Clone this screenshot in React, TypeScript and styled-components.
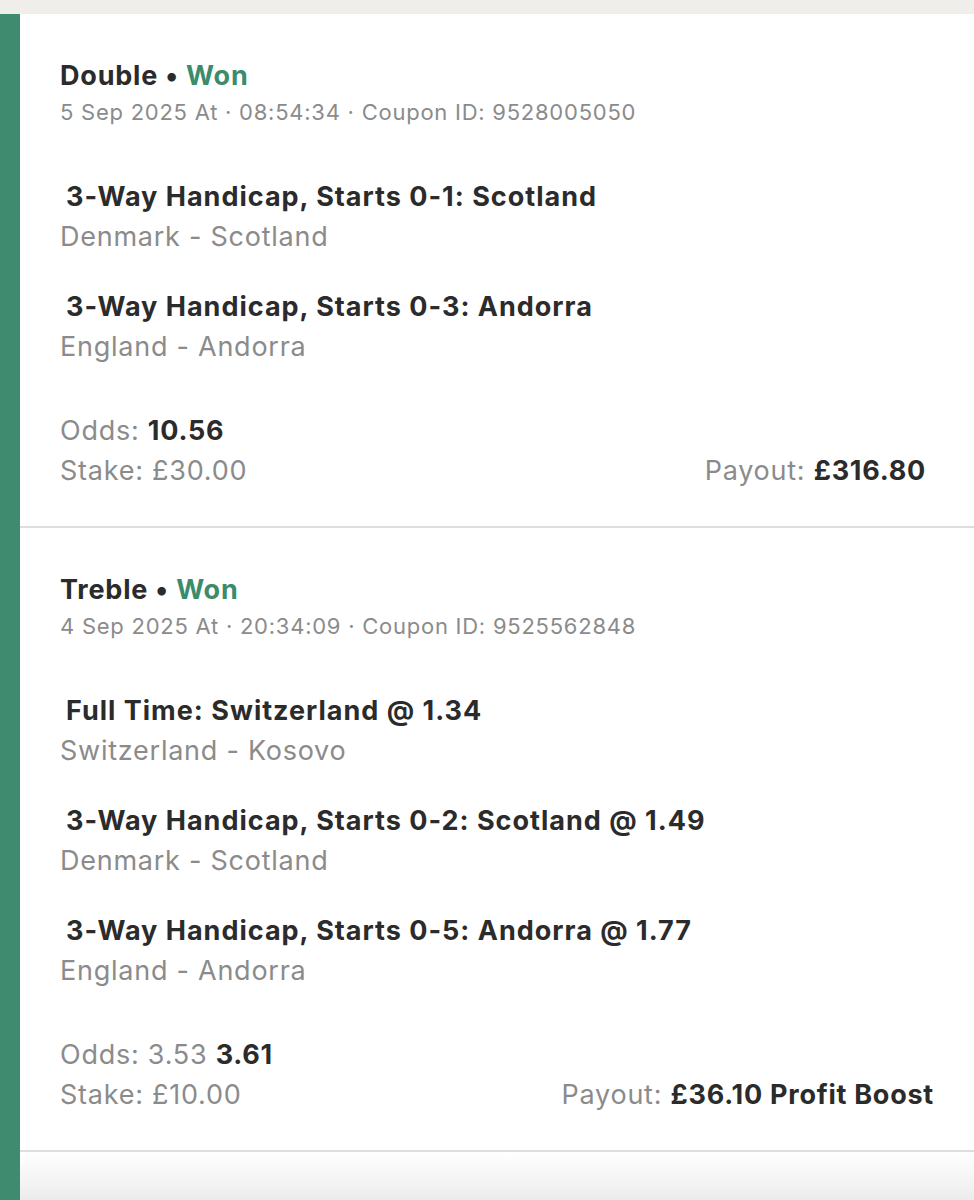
import React from 'react';
import styled, { createGlobalStyle } from 'styled-components';

interface Selection {
  market: string;
  event: string;
}

interface Bet {
  id: string;
  type: string;
  status: string;
  date: string;
  time: string;
  coupon: string;
  selections: Selection[];
  oldOdds?: string;
  odds: string;
  stake: string;
  payout: string;
  payoutRight: number;
}

const bets: Bet[] = [
  {
    id: 'b1',
    type: 'Double',
    status: 'Won',
    date: '5 Sep 2025 At',
    time: '08:54:34',
    coupon: '9528005050',
    selections: [
      { market: '3-Way Handicap, Starts 0-1: Scotland', event: 'Denmark - Scotland' },
      { market: '3-Way Handicap, Starts 0-3: Andorra', event: 'England - Andorra' },
    ],
    odds: '10.56',
    stake: '£30.00',
    payout: '£316.80',
    payoutRight: 48,
  },
  {
    id: 'b2',
    type: 'Treble',
    status: 'Won',
    date: '4 Sep 2025 At',
    time: '20:34:09',
    coupon: '9525562848',
    selections: [
      { market: 'Full Time: Switzerland @ 1.34', event: 'Switzerland - Kosovo' },
      { market: '3-Way Handicap, Starts 0-2: Scotland @ 1.49', event: 'Denmark - Scotland' },
      { market: '3-Way Handicap, Starts 0-5: Andorra @ 1.77', event: 'England - Andorra' },
    ],
    oldOdds: '3.53',
    odds: '3.61',
    stake: '£10.00',
    payout: '£36.10 Profit Boost',
    payoutRight: 40,
  },
];

const GlobalStyle = createGlobalStyle`
  html, body {
    margin: 0;
    padding: 0;
    background: #ffffff;
  }
  body {
    font-family: Inter, "Liberation Sans", Arial, sans-serif;
    -webkit-font-smoothing: antialiased;
  }
`;

const Page = styled.div`
  width: 974px;
  height: 1200px;
  overflow: hidden;
  display: flex;
  flex-direction: column;
  background: #efeeea;
`;

const TopStrip = styled.div`
  height: 14px;
  flex-shrink: 0;
  background: #efeeea;
`;

const Body = styled.div`
  flex: 1;
  display: flex;
`;

const SideBar = styled.div`
  width: 20px;
  flex-shrink: 0;
  background: #3e8b70;
`;

const List = styled.div`
  flex: 1;
  display: flex;
  flex-direction: column;
  background: #ffffff;
`;

const BetCard = styled.section`
  padding: 46px 0 35px 40px;
  border-bottom: 2px solid #dedede;
`;

const BetTitle = styled.h2`
  margin: 0;
  font-size: 27px;
  line-height: 32px;
  font-weight: 700;
  letter-spacing: 0.8px;
  color: #2b2b2b;
`;

const Status = styled.span`
  color: #3b8b6d;
`;

const Meta = styled.div`
  margin-top: 6px;
  font-size: 22px;
  line-height: 28px;
  letter-spacing: 0.75px;
  color: #8b8b8b;
`;

const Selections = styled.div`
  margin-top: 51px;
  display: flex;
  flex-direction: column;
  gap: 30px;
`;

const Market = styled.div`
  padding-left: 6px;
  font-size: 27px;
  line-height: 40px;
  font-weight: 700;
  letter-spacing: 1px;
  color: #2b2b2b;
`;

const EventName = styled.div`
  font-size: 27px;
  line-height: 40px;
  letter-spacing: 0.75px;
  color: #8b8b8b;
`;

const Summary = styled.div`
  margin-top: 44px;
  font-size: 27px;
  line-height: 40px;
  letter-spacing: 0.75px;
  color: #8b8b8b;
`;

const SummaryRow = styled.div<{ $right: number }>`
  display: flex;
  justify-content: space-between;
  padding-right: ${({ $right }) => $right}px;
`;

const Strong = styled.strong`
  font-weight: 700;
  color: #2b2b2b;
`;

const Footer = styled.div`
  flex: 1;
  background: linear-gradient(to bottom, #ffffff 0%, #f4f4f4 60%, #ebebeb 100%);
`;

const BetItem: React.FC<{ bet: Bet }> = ({ bet }) => (
  <BetCard>
    <BetTitle>
      {bet.type} • <Status>{bet.status}</Status>
    </BetTitle>
    <Meta>
      {bet.date} · {bet.time} · Coupon ID: {bet.coupon}
    </Meta>
    <Selections>
      {bet.selections.map((s) => (
        <div key={s.market}>
          <Market>{s.market}</Market>
          <EventName>{s.event}</EventName>
        </div>
      ))}
    </Selections>
    <Summary>
      <div>
        Odds: {bet.oldOdds ? `${bet.oldOdds} ` : ''}
        <Strong>{bet.odds}</Strong>
      </div>
      <SummaryRow $right={bet.payoutRight}>
        <span>Stake: {bet.stake}</span>
        <span>
          Payout: <Strong>{bet.payout}</Strong>
        </span>
      </SummaryRow>
    </Summary>
  </BetCard>
);

const App: React.FC = () => (
  <>
    <GlobalStyle />
    <Page>
      <TopStrip />
      <Body>
        <SideBar />
        <List>
          {bets.map((bet) => (
            <BetItem key={bet.id} bet={bet} />
          ))}
          <Footer />
        </List>
      </Body>
    </Page>
  </>
);

export default App;
